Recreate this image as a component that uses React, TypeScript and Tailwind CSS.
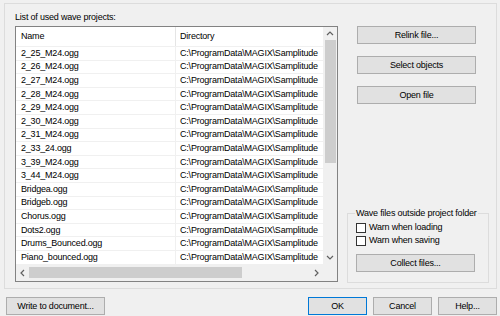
import React from 'react';

const rows = [
  '2_25_M24.ogg',
  '2_26_M24.ogg',
  '2_27_M24.ogg',
  '2_28_M24.ogg',
  '2_29_M24.ogg',
  '2_30_M24.ogg',
  '2_31_M24.ogg',
  '2_33_24.ogg',
  '3_39_M24.ogg',
  '3_44_M24.ogg',
  'Bridgea.ogg',
  'Bridgeb.ogg',
  'Chorus.ogg',
  'Dots2.ogg',
  'Drums_Bounced.ogg',
  'Piano_bounced.ogg',
];

const DIR = 'C:\\ProgramData\\MAGIX\\Samplitude';

const Chevron: React.FC<{ dir: 'up' | 'down' | 'left' | 'right' }> = ({ dir }) => {
  const pts = {
    up: '1,5 4,2 7,5',
    down: '1,2 4,5 7,2',
    left: '5,1 2,4 5,7',
    right: '2,1 5,4 2,7',
  }[dir];
  return (
    <svg width="8" height="8" viewBox="0 0 8 8">
      <polyline points={pts} fill="none" stroke="#606060" strokeWidth="1.2" />
    </svg>
  );
};

const Button: React.FC<{ label: string; className?: string }> = ({ label, className = '' }) => (
  <div
    className={`h-[18px] flex items-center justify-center bg-[#e1e1e1] border border-[#adadad] ${className}`}
  >
    {label}
  </div>
);

const FileList: React.FC = () => (
  <div className="w-[323px] h-[256px] border border-[#828282] bg-white flex flex-col">
    <div className="flex h-[237px]">
      <div className="w-[307px] overflow-hidden">
        <div className="flex h-[19px] items-center">
          <div className="w-[160px] pl-[5px] border-r border-[#e5e5e5] h-full flex items-center">Name</div>
          <div className="pl-[4px] whitespace-nowrap">Directory</div>
        </div>
        {rows.map((name) => (
          <div key={name} className="flex h-[13.6px] items-center border-t border-[#f0f0f0]">
            <div className="w-[160px] pl-[5px] border-r border-[#f0f0f0] h-full flex items-center">{name}</div>
            <div className="pl-[4px] whitespace-nowrap">{DIR}</div>
          </div>
        ))}
      </div>
      <div className="w-[14px] bg-[#f0f0f0] flex flex-col items-center">
        <div className="h-[13px] flex items-center justify-center">
          <Chevron dir="up" />
        </div>
        <div className="w-[11px] h-[123px] bg-[#cdcdcd]" />
        <div className="flex-1" />
        <div className="h-[13px] flex items-center justify-center">
          <Chevron dir="down" />
        </div>
      </div>
    </div>
    <div className="flex h-[17px] bg-[#f0f0f0]">
      <div className="w-[307px] flex items-center">
        <div className="w-[13px] flex justify-center">
          <Chevron dir="left" />
        </div>
        <div className="w-[213px] h-[11px] bg-[#cdcdcd]" />
        <div className="flex-1" />
        <div className="w-[13px] flex justify-center">
          <Chevron dir="right" />
        </div>
      </div>
      <div className="w-[14px]" />
    </div>
  </div>
);

const Checkbox: React.FC<{ label: string }> = ({ label }) => (
  <div className="flex items-center h-[13px] gap-[3px]">
    <div className="w-[10px] h-[10px] bg-white border border-[#333333]" />
    <span>{label}</span>
  </div>
);

export default function App() {
  return (
    <div className="w-[500px] h-[316px] bg-[#f0f0f0] pt-[3px] pl-[4px] font-['Liberation_Sans',Arial,sans-serif] text-[9px] tracking-[-0.2px] text-black leading-none">
      <div className="w-[493px] h-[286px] border border-[#dcdcdc] flex">
        <div className="pl-[10px] pt-[7px] flex flex-col">
          <div className="h-[12px] flex items-center mb-[3px]">List of used wave projects:</div>
          <FileList />
        </div>
        <div className="flex-1 pl-[9px] pt-[22px] pr-[7px] pb-[5px] flex flex-col">
          <Button label="Relink file..." className="ml-[10px] w-[119px]" />
          <Button label="Select objects" className="ml-[10px] w-[119px] mt-[12px]" />
          <Button label="Open file" className="ml-[10px] w-[119px] mt-[12px]" />
          <fieldset className="mt-auto h-[74px] border border-[#dcdcdc] px-[8px]">
            <legend className="px-[1px] -ml-[1px]">Wave files outside project folder</legend>
            <div className="mt-[3px]">
              <Checkbox label="Warn when loading" />
              <Checkbox label="Warn when saving" />
            </div>
            <Button label="Collect files..." className="w-[119px] mt-[7px]" />
          </fieldset>
        </div>
      </div>
      <div className="flex mt-[8px] pr-[3px] items-start">
        <Button label="Write to document..." className="ml-[2px] w-[99px]" />
        <div className="flex-1" />
        <Button label="OK" className="w-[59px] !border-[#0078d7]" />
        <Button label="Cancel" className="w-[59px] ml-[6px]" />
        <Button label="Help..." className="w-[59px] ml-[6px]" />
      </div>
    </div>
  );
}
